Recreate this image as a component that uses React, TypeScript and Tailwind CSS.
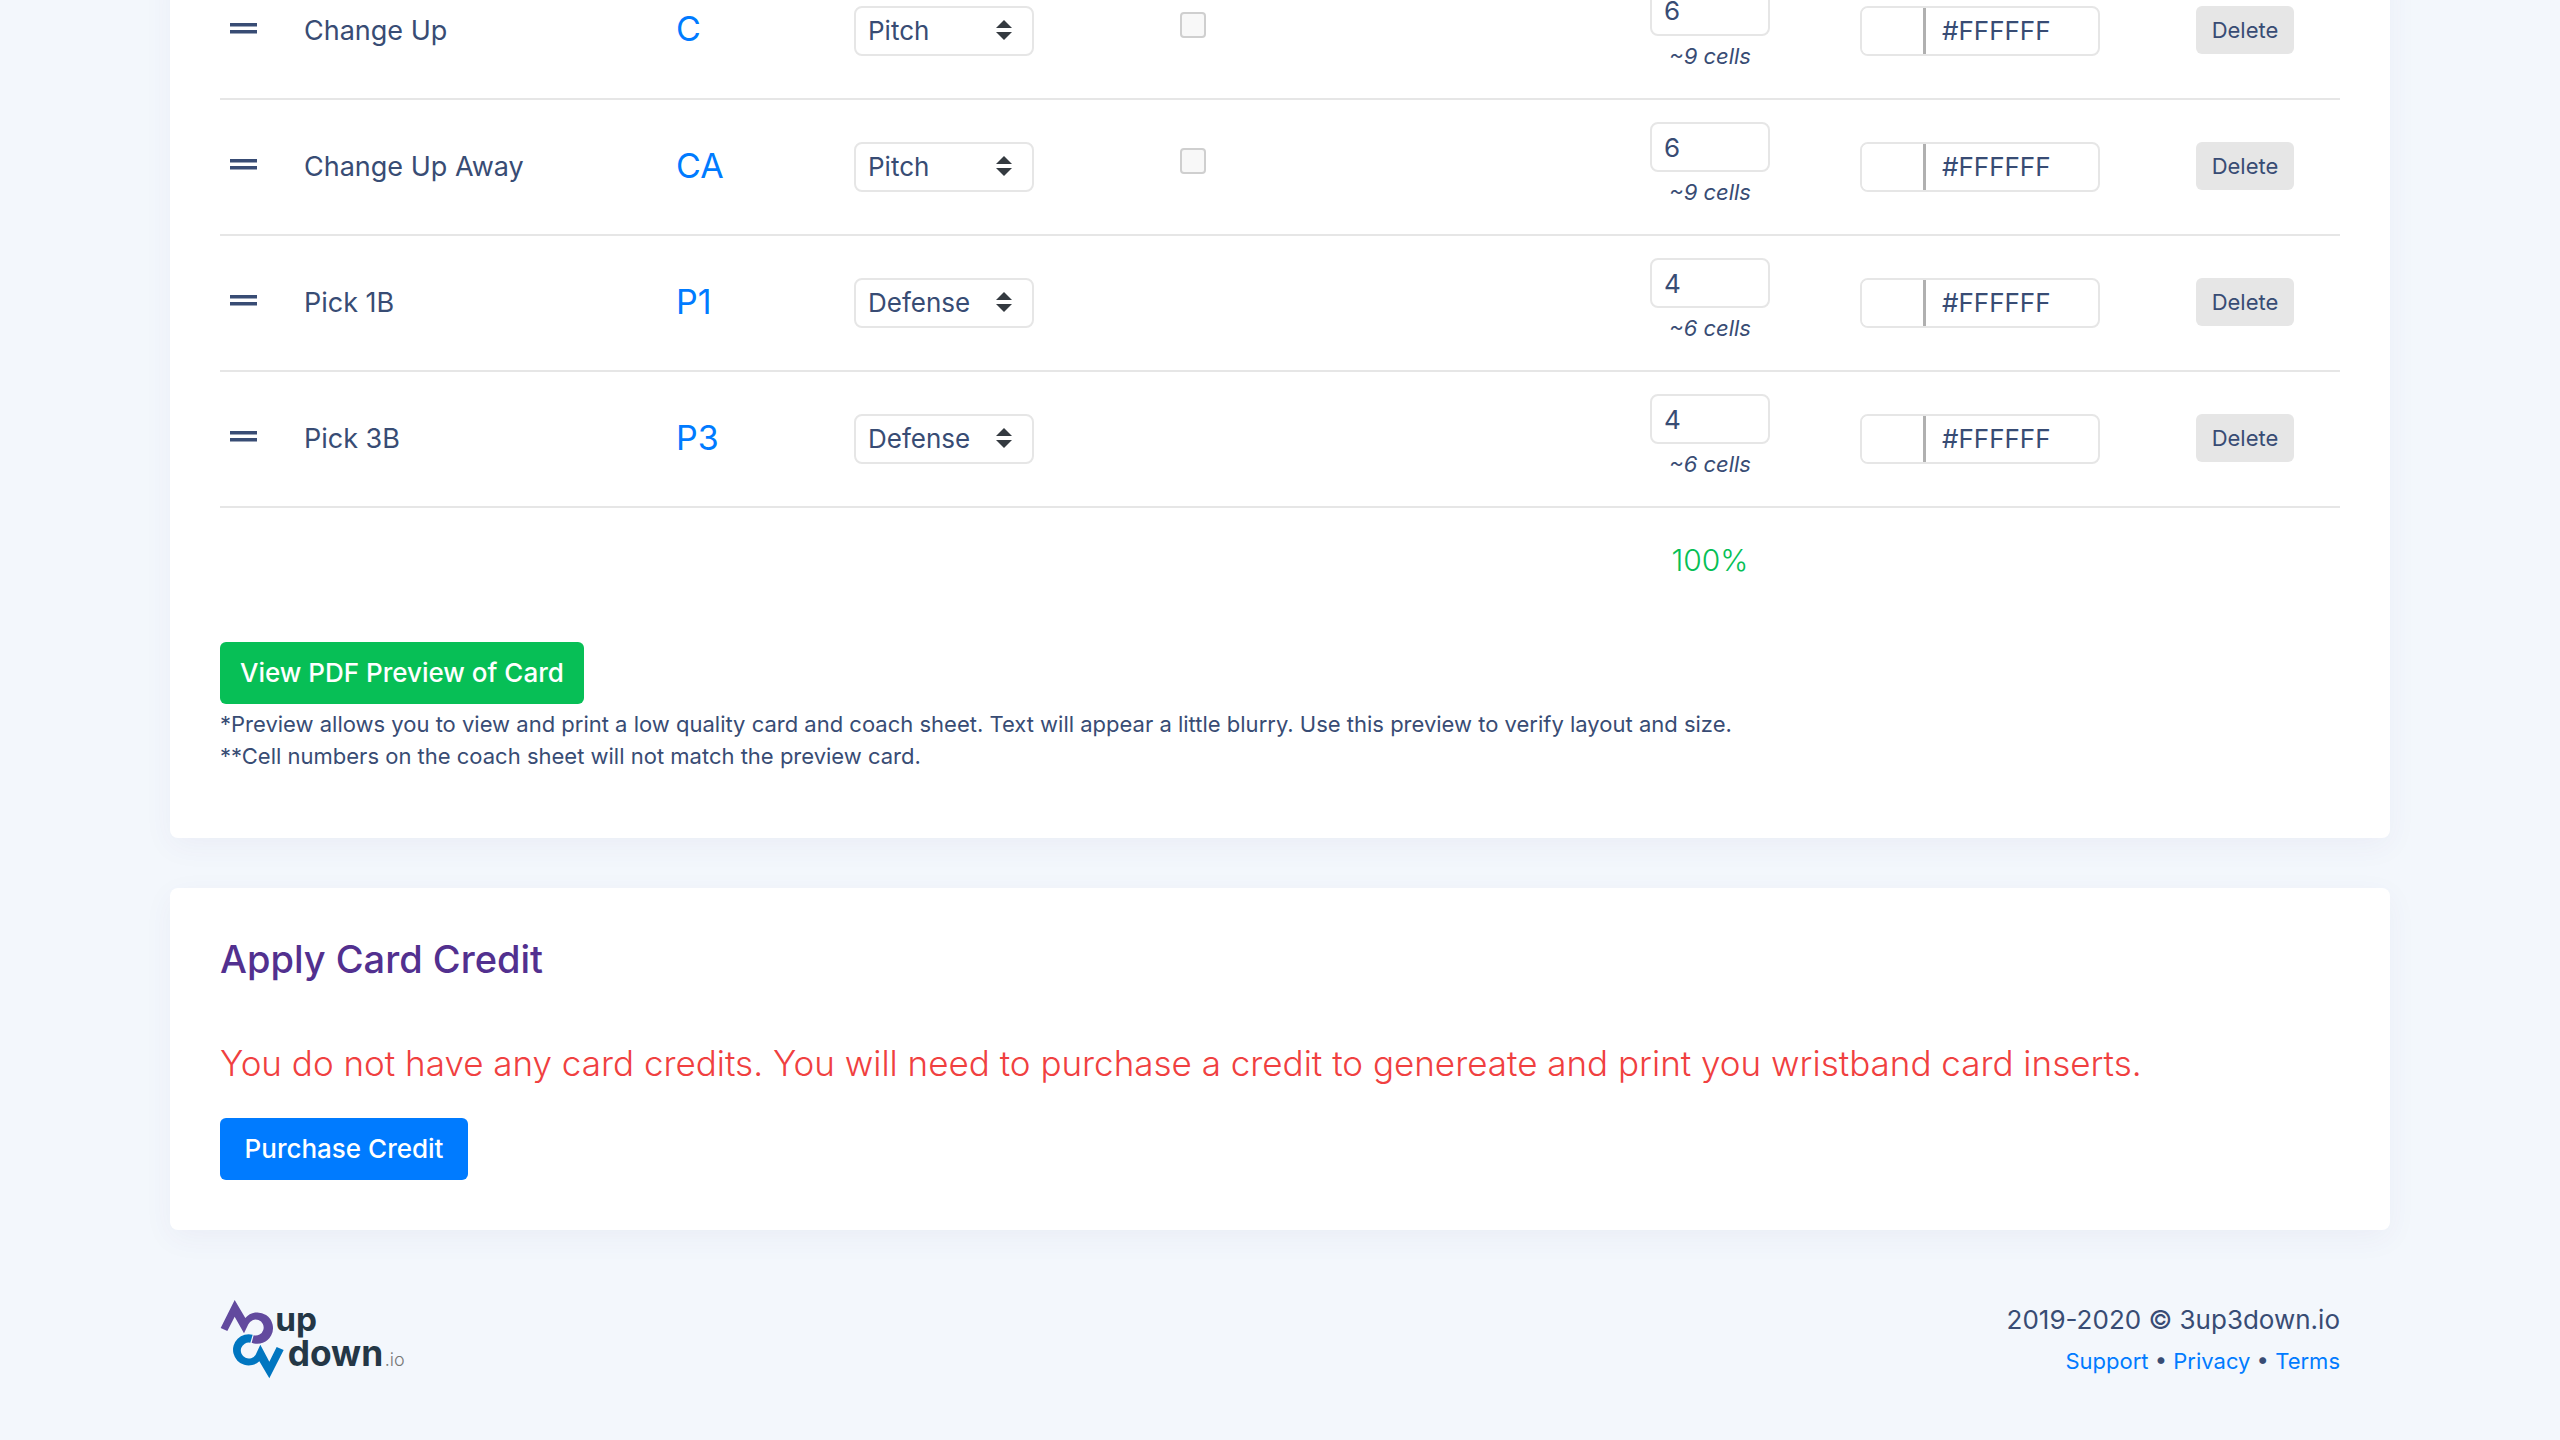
import { useState } from 'react'

interface PitchRow {
  name: string
  code: string
  type: 'Pitch' | 'Defense'
  percent: number
  cells: number
  color: string
}

const rows: PitchRow[] = [
  { name: 'Change Up', code: 'C', type: 'Pitch', percent: 6, cells: 9, color: '#FFFFFF' },
  { name: 'Change Up Away', code: 'CA', type: 'Pitch', percent: 6, cells: 9, color: '#FFFFFF' },
  { name: 'Pick 1B', code: 'P1', type: 'Defense', percent: 4, cells: 6, color: '#FFFFFF' },
  { name: 'Pick 3B', code: 'P3', type: 'Defense', percent: 4, cells: 6, color: '#FFFFFF' },
]

function DragHandle() {
  return (
    <svg viewBox="0 0 28 12" className="w-7 h-3" fill="#384c74" aria-hidden="true">
      <rect x="0" y="0" width="27" height="3.5" />
      <rect x="0" y="7" width="27" height="3.5" />
    </svg>
  )
}

function Row({ row }: { row: PitchRow }) {
  const [type, setType] = useState<string>(row.type)
  const [percent, setPercent] = useState(String(row.percent))
  const [color, setColor] = useState(row.color)

  return (
    <tr className="h-[136px] border-b-2 border-[#e6e6e6]">
      <td className="pl-2.5 pb-1">
        <DragHandle />
      </td>
      <td className="text-[27px]">{row.name}</td>
      <td>
        <a href="#edit" className="text-[34px] leading-10 text-[#007bff]">{row.code}</a>
      </td>
      <td>
        <div className="relative w-[180px]">
          <select
            value={type}
            onChange={(e) => setType(e.target.value)}
            aria-label={`Type of ${row.name}`}
            className="block w-full h-[50px] pl-3 pr-8 appearance-none rounded-lg border-2 border-[#e6e6e6] bg-white"
          >
            <option>Pitch</option>
            <option>Defense</option>
          </select>
          <svg viewBox="0 0 16 20" className="absolute right-[22px] top-3.5 w-4 h-5 pointer-events-none" fill="#343a40" aria-hidden="true">
            <path d="M8 0 16 8H0zM8 20 0 12h16z" />
          </svg>
        </div>
      </td>
      <td className="pb-3">
        {row.type === 'Pitch' && (
          <input
            type="checkbox"
            disabled
            aria-label={`Highlight ${row.name}`}
            className="block size-[26px] appearance-none rounded-sm border-2 border-[#cfcfcf] bg-[#f8f8f8]"
          />
        )}
      </td>
      <td>
        <div className="w-[120px]">
          <input
            type="text"
            value={percent}
            onChange={(e) => setPercent(e.target.value)}
            aria-label={`Percent of ${row.name}`}
            className="block w-full h-[50px] px-3 rounded-lg border-2 border-[#e6e6e6] bg-white"
          />
          <div className="h-10 text-center text-[22px] leading-10 italic">~{row.cells} cells</div>
        </div>
      </td>
      <td>
        <div className="flex w-60 h-[50px] overflow-hidden rounded-lg border-2 border-[#e6e6e6] bg-white">
          <input
            type="color"
            value={color.toLowerCase()}
            onChange={(e) => setColor(e.target.value.toUpperCase())}
            aria-label={`Pick color of ${row.name}`}
            className="w-16 h-full shrink-0 appearance-none border-r-3 border-[#b0b0b0] bg-white [&::-webkit-color-swatch-wrapper]:p-0 [&::-webkit-color-swatch]:border-0"
          />
          <input
            type="text"
            value={color}
            onChange={(e) => setColor(e.target.value)}
            aria-label={`Color of ${row.name}`}
            className="min-w-0 flex-1 pl-4"
          />
        </div>
      </td>
      <td className="pb-0.5">
        <button type="button" className="block w-[98px] h-12 rounded-md bg-[#e6e6e6] text-[22px]">Delete</button>
      </td>
    </tr>
  )
}

function Logo() {
  return (
    <svg viewBox="0 0 570 240" className="w-[190px] h-20 overflow-visible" role="img" aria-label="3up3down.io">
      <path
        fill="#624a9e"
        d="M2 84 44 0 76 54A47 47 0 1 1 95 128L101 106A24 24 0 1 0 85 73L72 100 44 50 22 93Z"
      />
      <path
        fill="#0076c0"
        d="M191 150 148 235 118 184A47 47 0 1 1 98 104L91 128A24 24 0 1 0 107 164L121 134 148 185 170 141Z"
      />
      <g fill="#243746" fontFamily="Inter, sans-serif" fontWeight="700">
        <text x="166" y="92" fontSize="100">up</text>
        <text x="203" y="197" fontSize="106">down</text>
      </g>
      <text x="494" y="197" fill="#777777" fontFamily="Inter, sans-serif" fontWeight="300" fontSize="54">.io</text>
    </svg>
  )
}

export default function App() {
  return (
    <div className="min-h-screen overflow-hidden bg-[#f3f7fc] font-['Inter',sans-serif] text-[26px] leading-10 text-[#384c74]">
      <main className="mx-auto w-full max-w-[2220px]">
        <section className="-mt-[37px] px-[50px] pb-[66px] rounded-b-lg bg-white shadow-[0_8px_30px_rgba(72,64,140,0.05)]">
          <table className="w-full table-fixed text-left">
            <colgroup>
              <col className="w-21" />
              <col className="w-[372px]" />
              <col className="w-[178px]" />
              <col className="w-[326px]" />
              <col />
              <col className="w-[210px]" />
              <col className="w-[336px]" />
              <col className="w-36" />
            </colgroup>
            <tbody>
              {rows.map((row) => (
                <Row key={row.name} row={row} />
              ))}
            </tbody>
            <tfoot>
              <tr className="h-[104px]">
                <td colSpan={5} />
                <td>
                  <div className="w-[120px] text-center text-[30px] font-light text-[#07bf56]">100%</div>
                </td>
                <td colSpan={2} />
              </tr>
            </tfoot>
          </table>

          <button type="button" className="block mt-[31px] h-[62px] px-5 rounded-md bg-[#07bf56] font-medium text-white">
            View PDF Preview of Card
          </button>
          <p className="mt-1 text-[22px] leading-8">
            *Preview allows you to view and print a low quality card and coach sheet. Text will appear a little blurry. Use this preview to verify layout and size.
            <br />
            **Cell numbers on the coach sheet will not match the preview card.
          </p>
        </section>

        <section className="mt-[50px] p-[50px] rounded-lg bg-white shadow-[0_8px_30px_rgba(72,64,140,0.05)]">
          <h2 className="text-[38px] leading-[42px] font-medium text-[#52308f]">Apply Card Credit</h2>
          <p className="mt-[58px] text-[35px] leading-[50px] font-light text-[#f04040]">
            You do not have any card credits. You will need to purchase a credit to genereate and print you wristband card inserts.
          </p>
          <button type="button" className="block mt-[30px] min-w-62 h-[62px] px-5 rounded-md bg-[#007bff] font-medium text-white">
            Purchase Credit
          </button>
        </section>

        <footer className="flex justify-between px-[50px] pt-[70px] pb-14">
          <Logo />
          <div className="text-right">
            <div>2019-2020 © 3up3down.io</div>
            <div className="text-[22px] leading-[42px]">
              <a href="#support" className="text-[#007bff]">Support</a>
              {' • '}
              <a href="#privacy" className="text-[#007bff]">Privacy</a>
              {' • '}
              <a href="#terms" className="text-[#007bff]">Terms</a>
            </div>
          </div>
        </footer>
      </main>
    </div>
  )
}
